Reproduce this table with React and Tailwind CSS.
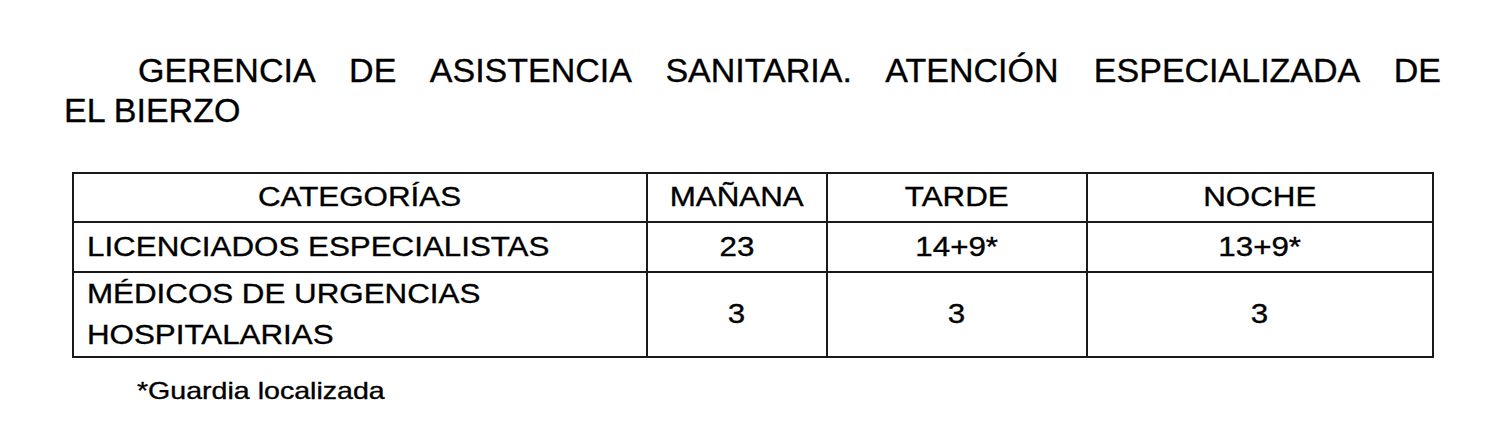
import React from 'react';

const rows = [
  { name: 'LICENCIADOS ESPECIALISTAS', values: ['23', '14+9*', '13+9*'] },
  { name: 'MÉDICOS DE URGENCIAS HOSPITALARIAS', values: ['3', '3', '3'], tall: true },
];

// cell text in the source is a little wider than plain Arial
function Txt({ children, left }) {
  return (
    <span className={`inline-block scale-x-[1.16] ${left ? 'origin-left' : 'origin-center'}`}>
      {children}
    </span>
  );
}

export default function App() {
  return (
    <div className="min-h-[440px] w-[1500px] bg-white pt-[50px] text-black font-['Liberation_Sans',Arial,sans-serif] [-webkit-text-stroke:0.35px_#000]">
      {/* Title */}
      <div className="pl-[64px] text-[34px] leading-[40px]">
        <div className="w-[1377px] indent-[74px] text-justify [text-align-last:justify]">
          GERENCIA DE ASISTENCIA SANITARIA. ATENCIÓN ESPECIALIZADA DE
        </div>
        <div>EL BIERZO</div>
      </div>

      {/* Table */}
      <div className="ml-[72px] mt-[42px] grid w-[1362px] grid-cols-[574px_180px_260px_346px] grid-rows-[49px_50px_85px] border-l-2 border-t-2 border-[#1a1a1a] text-[27px]">
        <div className="flex items-center justify-center border-b-2 border-r-2 border-[#1a1a1a]"><Txt>CATEGORÍAS</Txt></div>
        <div className="flex items-center justify-center border-b-2 border-r-2 border-[#1a1a1a]"><Txt>MAÑANA</Txt></div>
        <div className="flex items-center justify-center border-b-2 border-r-2 border-[#1a1a1a]"><Txt>TARDE</Txt></div>
        <div className="flex items-center justify-center border-b-2 border-r-2 border-[#1a1a1a]"><Txt>NOCHE</Txt></div>

        {rows.map((r) => (
          <React.Fragment key={r.name}>
            <div className="flex items-center border-b-2 border-r-2 border-[#1a1a1a] pl-[13px] pr-4 leading-[41px]">
              {r.tall ? (
                <Txt left>MÉDICOS DE URGENCIAS<br />HOSPITALARIAS</Txt>
              ) : (
                <Txt left>{r.name}</Txt>
              )}
            </div>
            {r.values.map((v, i) => (
              <div key={i} className="flex items-center justify-center border-b-2 border-r-2 border-[#1a1a1a]">
                <Txt>{v}</Txt>
              </div>
            ))}
          </React.Fragment>
        ))}
      </div>

      {/* Footnote */}
      <div className="ml-[137px] mt-[19px] text-[24px] leading-[28px]">
        <span className="inline-block origin-left scale-x-[1.19]">*Guardia localizada</span>
      </div>
    </div>
  );
}
